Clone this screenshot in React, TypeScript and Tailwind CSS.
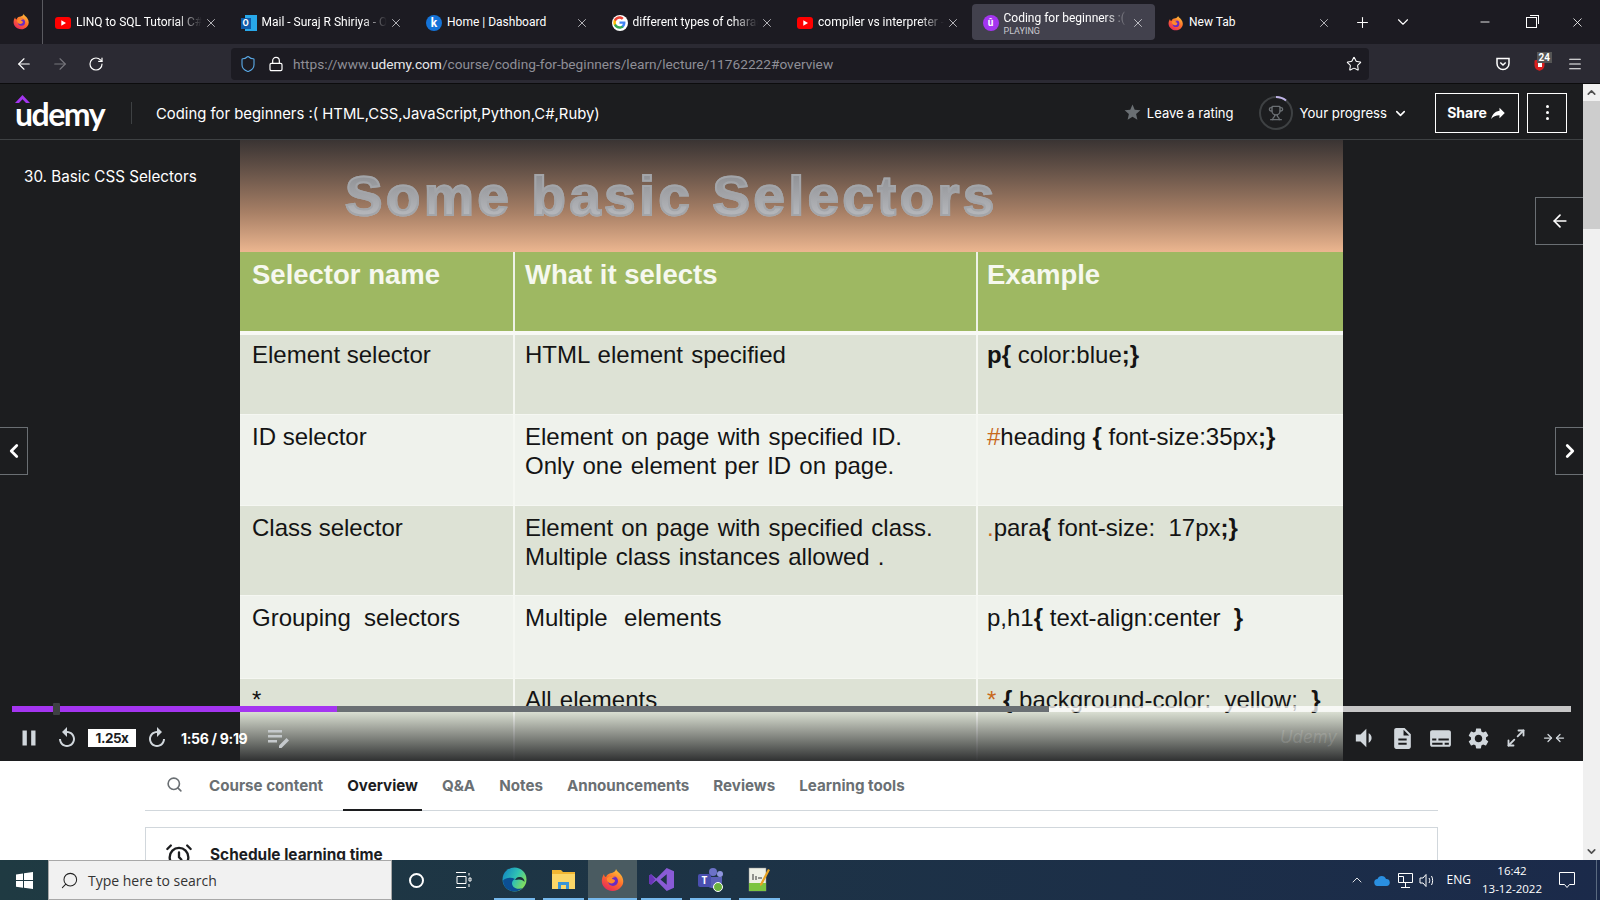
import { ArrowLeft, ArrowRight, ChevronDown, ChevronLeft, ChevronRight, ChevronUp, Lock, Maximize2, Menu, Minus, Plus, RotateCw, Search, Shield, Star, Trophy, X, AlarmClock } from 'lucide-react';
import { MdDescription, MdPause, MdReplay, MdReply, MdSettings, MdStar, MdSubtitles, MdVolumeDown } from 'react-icons/md';

function Firefox({ size = 18 }: { size?: number }) {
  return (
    <svg width={size} height={size} viewBox="0 0 24 24">
      <defs>
        <linearGradient id="ffBody" x1="0.8" y1="0" x2="0.2" y2="1">
          <stop offset="0" stopColor="#ffc93a" />
          <stop offset="0.5" stopColor="#ff6a2b" />
          <stop offset="1" stopColor="#e5245e" />
        </linearGradient>
      </defs>
      <path d="M15 1c1 3 3 3 5 6 3 4 3 9 0 12-3 4-9 5-13 3C3 20 0 16 1 11c.3-2 1-3 2-5 0 2 1 3 2 3 1-3 4-4 6-4 2-1 4-2 4-4z" fill="url(#ffBody)" />
      <circle cx="12" cy="13" r="5" fill="#6a2bc4" />
      <path d="M6 10c2-2 6-3 9-1-3 0-4 1-4 2 2 0 3 1 3 2-1 3-5 3-7 1-1-1-1.500-3-1-4z" fill="#ff8a2b" />
    </svg>
  );
}

function YouTube() {
  return (
    <svg width="16" height="16" viewBox="0 0 16 16">
      <rect x="0" y="2" width="16" height="12" rx="3" fill="#f00" />
      <path d="M6.300 5.300 11 8l-4.700 2.700z" fill="#fff" />
    </svg>
  );
}

function Outlook() {
  return (
    <div className="relative h-4 w-4">
      <div className="absolute right-0 top-0 h-4 w-3 bg-[#28a8ea]" />
      <div className="absolute left-0 top-[3px] flex h-[11px] w-[10px] items-center justify-center bg-[#0f5ba8] text-[9px] font-bold leading-none text-white">O</div>
    </div>
  );
}

function Google() {
  return (
    <div className="flex h-4 w-4 items-center justify-center rounded-full bg-white">
      <svg width="13" height="13" viewBox="0 0 24 24">
        <path d="M23 12.300c0-.8-.1-1.600-.2-2.300H12v4.400h6.200c-.3 1.400-1.100 2.600-2.300 3.400v2.800h3.700c2.100-2 3.400-4.900 3.400-8.300z" fill="#4285f4" />
        <path d="M12 23.500c3.100 0 5.700-1 7.600-2.800l-3.700-2.900c-1 .7-2.300 1.100-3.900 1.100-3 0-5.500-2-6.400-4.700H1.800v2.900c1.900 3.800 5.800 6.400 10.200 6.400z" fill="#34a853" />
        <path d="M5.600 14.200c-.5-1.400-.5-3 0-4.400V6.900H1.800c-1.600 3.200-1.600 7 0 10.200z" fill="#fbbc05" />
        <path d="M12 5.100c1.700 0 3.200.6 4.400 1.700l3.300-3.300C17.700 1.600 15.100.5 12 .5 7.600.5 3.700 3.100 1.800 6.900l3.800 2.900C6.500 7.100 9 5.100 12 5.100z" fill="#ea4335" />
      </svg>
    </div>
  );
}

function Klipfolio() {
  return <div className="flex h-4 w-4 items-center justify-center rounded-full bg-[#1473d8] text-[12px] font-bold leading-none text-white">k</div>;
}

function UdemyFav() {
  return <div className="flex h-4 w-4 items-center justify-center rounded-full bg-[#a435f0] text-[10px] font-bold leading-none text-white">û</div>;
}

const tabs = [
  { title: 'LINQ to SQL Tutorial C# - YouTube', icon: <YouTube />, fade: true },
  { title: 'Mail - Suraj R Shiriya - Outlook', icon: <Outlook />, fade: true },
  { title: 'Home | Dashboard', icon: <Klipfolio />, fade: false },
  { title: 'different types of character', icon: <Google />, fade: true },
  { title: 'compiler vs interpreter - YouTube', icon: <YouTube />, fade: true },
  { title: 'Coding for beginners :( HTML', icon: <UdemyFav />, fade: true, active: true },
  { title: 'New Tab', icon: <Firefox size={16} />, fade: false },
];

function TabBar() {
  return (
    <div className="flex h-[44px] items-stretch bg-[#1c1b22] text-white">
      <div className="flex w-[43px] items-center justify-center border-r border-[#5a5a60] pb-[2px]">
        <Firefox size={17} />
      </div>
      {tabs.map((t) => (
        <div key={t.title} className="w-[185.500px] shrink-0 py-[4px] pl-[1px] pr-[1px]">
          <div className={`flex h-full items-center rounded pl-[11px] pr-[10px] pt-[1px] ${t.active ? 'bg-[#42414d]' : ''}`}>
            <div className="mr-[5px] shrink-0">{t.icon}</div>
            <div className={`min-w-0 flex-1 ${t.active ? 'pt-[3px]' : ''}`}>
              <div className={`overflow-hidden whitespace-nowrap text-[12px] leading-[15px] ${t.fade ? '[mask-image:linear-gradient(to_right,black_80%,transparent)]' : ''}`}>{t.title}</div>
              {t.active && <div className="text-[9px] leading-[11px] text-[#c9c8cf]">PLAYING</div>}
            </div>
            <X size={14} strokeWidth={1.300} className="ml-[2px] shrink-0 text-[#e0e0e4]" />
          </div>
        </div>
      ))}
      <div className="flex w-[41px] items-center justify-center"><Plus size={17} strokeWidth={1.500} /></div>
      <div className="flex w-[40px] items-center justify-center"><ChevronDown size={18} strokeWidth={1.500} /></div>
      <div className="flex flex-1 items-center justify-end">
        <div className="flex w-[46px] justify-center"><Minus size={14} strokeWidth={1.500} /></div>
        <div className="flex w-[46px] justify-center">
          <div className="relative h-[11px] w-[11px] border border-white">
            <div className="absolute -right-[3px] -top-[3px] h-[9px] w-[9px] border-r border-t border-white" />
          </div>
        </div>
        <div className="flex w-[46px] justify-center"><X size={15} strokeWidth={1.300} /></div>
      </div>
    </div>
  );
}

function Toolbar() {
  return (
    <div className="flex h-[40px] items-center border-b border-[#0c0c0d] bg-[#2b2a33] pt-[1px] text-white">
      <div className="flex w-[231px] items-center pl-[15px]">
        <ArrowLeft size={18} strokeWidth={1.500} className="mr-[18px]" />
        <ArrowRight size={18} strokeWidth={1.500} className="mr-[18px] text-[#77767d]" />
        <RotateCw size={16} strokeWidth={1.800} className="ml-[1px]" />
      </div>
      <div className="flex h-[32px] w-[1138px] items-center rounded bg-[#1c1b22] pl-[8px] pr-[7px]">
        <Shield size={18} strokeWidth={1.500} className="mr-[11px] text-[#5aa9e6]" />
        <Lock size={16} strokeWidth={1.800} className="mr-[9px]" />
        <div className="flex-1 whitespace-nowrap text-[13.700px] text-[#8f8f97]">
          https://www.<span className="text-[#e8e8ea]">udemy.com</span>/course/coding-for-beginners/learn/lecture/11762222#overview
        </div>
        <Star size={16} strokeWidth={1.600} />
      </div>
      <div className="flex flex-1 items-center pl-[126px]">
        <svg width="16" height="16" viewBox="0 0 16 16" fill="none" stroke="#fff" strokeWidth="1.500">
          <path d="M2 2.500h12v5a6 6 0 0 1-12 0z" />
          <path d="M5.300 6.500 8 9l2.700-2.500" />
        </svg>
        <div className="relative ml-[21px] mr-[20px]">
          <Shield size={15} fill="#d81e1e" strokeWidth={0} />
          <div className="absolute left-[5.500px] top-[6px] h-[4px] w-[4px] bg-white" />
          <div className="absolute -right-[5px] -top-[5px] bg-[#555] px-[2px] text-[10px] font-bold leading-[11px]">24</div>
        </div>
        <Menu size={16} strokeWidth={1.600} />
      </div>
    </div>
  );
}

function UdemyHeader() {
  return (
    <div className="flex h-[56px] items-center border-b border-[#3e4143] bg-[#1c1d1f] pr-[16px] pt-[2px] text-white" style={{ fontFamily: 'Inter, sans-serif' }}>
      <div className="relative ml-[15px] w-[92px]">
        <svg width="15" height="8" viewBox="0 0 15 8" className="absolute left-0 top-[0px]">
          <path d="M7.500 0 15 8H11L7.500 4.200 4 8H0z" fill="#a435f0" />
        </svg>
        <div className="pt-[3px] text-[32px] font-bold leading-[32px] tracking-[-1.500px]" style={{ fontFamily: 'Lato, sans-serif' }}>udemy</div>
      </div>
      <div className="ml-[24px] h-[22px] w-px bg-[#3e4143]" />
      <div className="ml-[24px] mt-[4px] flex-1 text-[14.850px]">Coding for beginners :( HTML,CSS,JavaScript,Python,C#,Ruby)</div>
      <MdStar size={19} className="text-[#6a6f73]" />
      <div className="ml-[5px] mt-[3px] text-[13px]">Leave a rating</div>
      <div className="relative ml-[24px] flex h-[36px] w-[36px] items-center justify-center">
        <svg width="36" height="36" viewBox="0 0 36 36" className="absolute inset-0" fill="none">
          <circle cx="18" cy="18" r="16" stroke="#3e4143" strokeWidth="2" />
          <path d="M18 2a16 16 0 0 1 10 3.500" stroke="#c0b4e8" strokeWidth="2" />
        </svg>
        <Trophy size={16} className="text-[#6a6f73]" />
      </div>
      <div className="ml-[6px] mt-[3px] text-[13.200px]">Your progress</div>
      <ChevronDown size={15} strokeWidth={2.500} className="ml-[6px] mt-[2px]" />
      <div className="ml-[27px] flex h-[40px] w-[84px] items-center justify-center gap-[2px] border border-white text-[14px] font-bold">
        Share
        <MdReply size={18} className="-scale-x-100" />
      </div>
      <div className="ml-[8px] flex h-[40px] w-[40px] items-center justify-center border border-white">
        <div className="flex flex-col gap-[3px]">
          <div className="h-[3px] w-[3px] rounded-full bg-white" />
          <div className="h-[3px] w-[3px] rounded-full bg-white" />
          <div className="h-[3px] w-[3px] rounded-full bg-white" />
        </div>
      </div>
    </div>
  );
}

function Br({ children }: { children: string }) {
  return <b className="font-bold">{children}</b>;
}

function Hi({ children }: { children: string }) {
  return <span className="text-[#c8691c]">{children}</span>;
}

const rows = [
  { h: 'h-[80px]', pad: 'pt-[5px]', bg: 'bg-[#dde2d5]', a: 'Element selector', b: 'HTML element specified', c: <><Br>{'p{'}</Br> color:blue<Br>{';}'}</Br></> },
  { h: 'h-[91px]', pad: 'pt-[7px]', bg: 'bg-[#eff2ec]', a: 'ID selector', b: 'Element on page with specified ID.\nOnly one element per ID on page.', c: <><Hi>#</Hi>heading <Br>{'{'}</Br> font-size:35px<Br>{';}'}</Br></> },
  { h: 'h-[90px]', pad: 'pt-[7px]', bg: 'bg-[#dde2d5]', a: 'Class selector', b: 'Element on page with specified class.\nMultiple class instances allowed .', c: <><Hi>.</Hi>para<Br>{'{'}</Br> font-size:  17px<Br>{';}'}</Br></> },
  { h: 'h-[83px]', pad: 'pt-[7px]', bg: 'bg-[#eff2ec]', a: 'Grouping  selectors', b: 'Multiple  elements', c: <>p,h1<Br>{'{'}</Br> text-align:center  <Br>{'}'}</Br></> },
  { h: 'h-[82px]', pad: 'pt-[6px]', bg: 'bg-[#dde2d5]', a: '*', b: 'All elements', c: <><Hi>*</Hi> <Br>{'{'}</Br> background-color:  yellow;  <Br>{'}'}</Br></> },
];

function Slide() {
  return (
    <div className="w-[1103px] overflow-hidden" style={{ fontFamily: '"Liberation Sans", Arial, sans-serif' }}>
      <div className="flex h-[112px] items-start bg-linear-to-b from-[#3a3433] via-[#a88066] via-65% to-[#ecb690] pl-[105px] pt-[23px]">
        <div className="bg-linear-to-b from-[#85868a] to-[#c3c5c9] bg-clip-text text-[56px] font-bold leading-[66px] tracking-[3.700px] text-transparent [-webkit-text-stroke:2px_#a3a5a9]">Some basic Selectors</div>
      </div>
      <div className="grid h-[79px] grid-cols-[275px_463px_365px] bg-[#9eb862] text-[27.500px] font-bold leading-[30px] text-[#f6f8ef]">
        <div className="border-r-2 border-[#eef1e6] pl-[12px] pt-[8px]">Selector name</div>
        <div className="border-r-2 border-[#eef1e6] pl-[10px] pt-[8px]">What it selects</div>
        <div className="pl-[9px] pt-[8px]">Example</div>
      </div>
      <div className="h-[4px] bg-[#f8f9f5]" />
      {rows.map((r) => (
        <div key={r.a} className={`grid grid-cols-[275px_463px_365px] border-b border-[#f5f7f2] text-[24px] leading-[29px] text-[#141414] ${r.h} ${r.bg}`}>
          <div className={`whitespace-pre border-r-2 border-[#f5f7f2] pl-[12px] ${r.pad}`}>{r.a}</div>
          <div className={`whitespace-pre border-r-2 border-[#f5f7f2] pl-[10px] [word-spacing:1.500px] ${r.pad}`}>{r.b}</div>
          <div className={`whitespace-pre pl-[9px] ${r.pad}`}>{r.c}</div>
        </div>
      ))}
    </div>
  );
}

function NoteIcon() {
  return (
    <svg width="24" height="20" viewBox="0 0 24 20" fill="#c5c9cc">
      <rect x="1" y="2" width="14" height="2.500" />
      <rect x="1" y="7" width="14" height="2.500" />
      <rect x="1" y="12" width="9" height="2.500" />
      <path d="M12 17.500v2.500h2.500l7.500-7.500-2.500-2.500z" />
    </svg>
  );
}

function Controls() {
  const btn = 'flex w-[38px] justify-center';
  return (
    <div className="absolute inset-x-0 bottom-0 h-[49px] text-white" style={{ fontFamily: 'Inter, sans-serif' }}>
      <div className="flex h-[46px] items-center justify-between pl-[10px] pr-[10px] pt-[6px]">
        <div className="flex items-center">
          <div className={btn}><MdPause size={26} className="text-[#d1d7dc]" /></div>
          <div className={btn}><MdReplay size={24} className="text-[#d1d7dc]" /></div>
          <div className="ml-[2px] flex h-[18px] w-[48px] items-center justify-center bg-white text-[13.500px] font-bold tracking-[-0.500px] text-[#1c1d1f]">1.25x</div>
          <div className={`${btn} ml-[2px]`}><MdReplay size={24} className="-scale-x-100 text-[#d1d7dc]" /></div>
          <div className="ml-[5px] w-[80px] whitespace-nowrap text-[14px] font-bold tracking-[-0.300px]">1:56 / 9:19</div>
          <div className="ml-[6px]"><NoteIcon /></div>
        </div>
        <div className="flex items-center">
          <div className="mr-[8px] text-[17px] italic text-white/15">Udemy</div>
          <div className={btn}><MdVolumeDown size={28} className="text-[#d1d7dc]" /></div>
          <div className={btn}><MdDescription size={25} className="text-[#d1d7dc]" /></div>
          <div className={btn}><MdSubtitles size={25} className="text-[#d1d7dc]" /></div>
          <div className={btn}><MdSettings size={25} className="text-[#d1d7dc]" /></div>
          <div className={btn}><Maximize2 size={20} strokeWidth={2.200} className="text-[#d1d7dc]" /></div>
          <div className={`${btn} items-center`}>
            <ArrowRight size={12} strokeWidth={2.500} className="text-[#d1d7dc]" />
            <ArrowLeft size={12} strokeWidth={2.500} className="text-[#d1d7dc]" />
          </div>
        </div>
      </div>
    </div>
  );
}

function Video() {
  return (
    <div className="relative flex h-[621px] bg-[#1c1d1f]">
      <div className="w-[240px] shrink-0 pl-[24px] pt-[25px] text-[15.200px] leading-[24px] text-white" style={{ fontFamily: 'Inter, sans-serif' }}>30. Basic CSS Selectors</div>
      <Slide />
      <div className="absolute inset-x-0 bottom-0 ml-[240px] mr-[240px] h-[50px] bg-linear-to-b from-transparent to-[#1c1d1f]/90" />

      <div className="absolute left-0 top-[287px] flex h-[48px] w-[28px] items-center justify-center border border-l-0 border-[#6a6f73] bg-[#1c1d1f] text-white">
        <ChevronLeft size={22} strokeWidth={3} />
      </div>
      <div className="absolute right-0 top-[287px] flex h-[48px] w-[28px] items-center justify-center border border-r-0 border-[#6a6f73] bg-[#1c1d1f] text-white">
        <ChevronRight size={22} strokeWidth={3} />
      </div>
      <div className="absolute right-0 top-[57px] flex h-[48px] w-[48px] items-center justify-center border border-r-0 border-[#6a6f73] bg-[#1c1d1f] text-white">
        <ArrowLeft size={20} strokeWidth={2} />
      </div>

      <div className="absolute inset-x-[12px] bottom-[49px] flex h-[6px]">
        <div className="w-[325px] bg-[#a435f0]" />
        <div className="w-[712px] bg-[#6a6f73]" />
        <div className="flex-1 bg-white/75" />
      </div>
      <div className="absolute bottom-[46px] left-[53px] h-[12px] w-[7px] rounded-[1px] bg-[#3e4143]" />
      <Controls />
    </div>
  );
}

function CourseTabs() {
  const items = ['Course content', 'Overview', 'Q&A', 'Notes', 'Announcements', 'Reviews', 'Learning tools'];
  return (
    <div className="flex-1 overflow-hidden bg-white" style={{ fontFamily: 'Inter, sans-serif' }}>
      <div className="ml-[145px] w-[1293px]">
        <div className="flex h-[50px] items-stretch border-b border-[#d1d7dc] pl-[21px]">
          <div className="w-[39px] pt-[15px]"><Search size={17} strokeWidth={2.300} className="text-[#6a6f73]" /></div>
          <div className="flex gap-[16px]">
            {items.map((item) => (
              <div
                key={item}
                className={`flex h-[50px] items-center border-b-2 px-[4px] pt-[2px] text-[15.150px] font-bold ${item === 'Overview' ? 'border-[#1c1d1f] text-[#1c1d1f]' : 'border-transparent text-[#6a6f73]'}`}
              >
                {item}
              </div>
            ))}
          </div>
        </div>
        <div className="mt-[16px] flex h-[80px] items-start border border-[#d1d7dc] pl-[19px] pt-[14px]">
          <AlarmClock size={28} strokeWidth={2} className="text-[#1c1d1f]" />
          <div className="ml-[17px] pt-[1px] text-[15.400px] font-bold text-[#1c1d1f]">Schedule learning time</div>
        </div>
      </div>
    </div>
  );
}

function Scrollbar() {
  return (
    <div className="flex w-[17px] shrink-0 flex-col bg-[#f0f0f0]">
      <div className="flex h-[17px] items-center justify-center bg-[#f0f0f0]"><ChevronUp size={13} strokeWidth={3} className="text-[#505050]" /></div>
      <div className="h-[128px] bg-[#cdcdcd]" />
      <div className="flex-1" />
      <div className="flex h-[17px] items-center justify-center"><ChevronDown size={13} strokeWidth={3} className="text-[#505050]" /></div>
    </div>
  );
}

const appIcons = [
  <svg key="edge" width="25" height="25" viewBox="0 0 24 24">
    <defs>
      <linearGradient id="edgeG" x1="0" y1="0" x2="1" y2="0.500">
        <stop offset="0" stopColor="#0f7fc4" />
        <stop offset="0.600" stopColor="#2fc2b4" />
        <stop offset="1" stopColor="#7ddc62" />
      </linearGradient>
    </defs>
    <circle cx="12" cy="12" r="11.500" fill="url(#edgeG)" />
    <path d="M1 13c0 6 5 10.500 11 10.500 3 0 6-1 7.500-3-3 1-8 .5-9.500-3-1-2.500 0-5 2.500-6-4-2-9-1-11.500 1.500z" fill="#0b4f94" />
    <path d="M12.500 12.500c4-1 8-.5 9 2 .5-3-2-5-5-5-2 0-3.500 1.500-4 3z" fill="#1c2f3c" />
  </svg>,
  <svg key="folder" width="23" height="21" viewBox="0 0 23 21">
    <path d="M0 1h9l2 2h12v17H0z" fill="#f2b632" />
    <rect x="0" y="5" width="23" height="15" fill="#fcd667" />
    <path d="M6 20v-7h11v7h-3v-4H9v4z" fill="#3a94d6" />
  </svg>,
  <Firefox key="ff" size={24} />,
  <svg key="vs" width="25" height="25" viewBox="0 0 24 24">
    <path d="M17 1 24 4v16l-7 3L7 13l-5 4-2-1.500V8.500L2 7l5 4zM17 7l-6 5 6 5z" fill="#8a5bd6" />
    <path d="M2 7 0 8.500v7L2 17l4-5z" fill="#6a35b8" />
  </svg>,
  <div key="teams" className="relative h-[24px] w-[25px]">
    <div className="absolute right-[6px] top-0 h-[8px] w-[8px] rounded-full bg-[#6c72c8]" />
    <div className="absolute right-0 top-[3px] h-[6px] w-[6px] rounded-full bg-[#8f95de]" />
    <div className="absolute right-[1px] top-[9px] h-[11px] w-[16px] rounded-b-md bg-[#5b60b8]" />
    <div className="absolute left-0 top-[6px] flex h-[13px] w-[13px] items-center justify-center rounded-[2px] bg-[#4a4fb0] text-[10px] font-bold leading-none text-white">T</div>
    <div className="absolute bottom-0 right-0 flex h-[10px] w-[10px] items-center justify-center rounded-full border border-white bg-[#6cb33f]" />
  </div>,
  <svg key="note" width="23" height="25" viewBox="0 0 23 25">
    <rect x="1" y="1" width="17" height="23" fill="#eef0e6" stroke="#888" strokeWidth="0.500" />
    <rect x="1" y="16" width="17" height="8" fill="#7cc440" />
    <path d="M5 7v6M8 9v4M10 11h4" stroke="#333" strokeWidth="1" />
    <path d="M20 2l2 1-8 15-2 1 0-2z" fill="#e8a323" />
  </svg>,
];

function Taskbar() {
  return (
    <div className="flex h-[40px] shrink-0 items-stretch bg-linear-to-r from-[#1f3a42] to-[#1b2a4a] text-white" style={{ fontFamily: '"Open Sans", sans-serif' }}>
      <div className="flex w-[48px] items-center justify-center">
        <svg width="17" height="17" viewBox="0 0 17 17" fill="#fff">
          <path d="M0 2.400 7 1.400v6.700H0zM8 1.200 17 0v8.100H8zM0 9h7v6.700l-7-1zM8 9h9v8l-9-1.300z" />
        </svg>
      </div>
      <div className="flex w-[344px] items-center border border-[#a8a8a8] bg-[#f1f1f1] pl-[11px] text-[14px] text-[#333]">
        <Search size={19} strokeWidth={1.300} className="mr-[9px] -scale-x-100 text-[#222]" />
        Type here to search
      </div>
      <div className="flex w-[48px] items-center justify-center">
        <div className="h-[15px] w-[15px] rounded-full border-2 border-white" />
      </div>
      <div className="flex w-[48px] items-center justify-center">
        <svg width="16" height="16" viewBox="0 0 16 16" fill="none" stroke="#fff" strokeWidth="1">
          <path d="M0 .500h10M0 15.500h10M1 4.500h9v7H1zM13 1v2.500M13 6h2v3h-2zM13 12v3" />
        </svg>
      </div>
      <div className="flex pl-[2px]">
        {appIcons.map((icon, i) => (
          <div key={i} className={`relative flex w-[49px] items-center justify-center pb-[1px] ${i === 2 ? 'bg-[#4a5b61]' : ''}`}>
            {icon}
            <div className={`absolute bottom-0 h-[2px] bg-[#76b9ed] ${i === 2 ? 'inset-x-0' : 'inset-x-[4px]'}`} />
          </div>
        ))}
      </div>
      <div className="flex flex-1 items-center justify-end text-white">
        <ChevronUp size={16} strokeWidth={1.300} className="mr-[9px]" />
        <svg width="16" height="11" viewBox="0 0 16 11" fill="#2a8fe0" className="mr-[7px]">
          <path d="M4 11a3.500 3.500 0 0 1-.5-7A4.500 4.500 0 0 1 12 4a3.500 3.500 0 0 1 .5 7z" />
        </svg>
        <svg width="17" height="17" viewBox="0 0 17 17" fill="none" stroke="#fff" strokeWidth="1" className="mr-[5px]">
          <path d="M1.500 1.500h14v9h-14zM8.500 10.500v5M4 15.500h9M1.500 4.500h5v6" />
        </svg>
        <svg width="17" height="15" viewBox="0 0 17 15" fill="none" stroke="#fff" strokeWidth="1" className="mr-[11px]">
          <path d="M1 5h3l3-3.500v12L4 10H1zM10 5c1 1.500 1 3.500 0 5M12.500 3c1.500 2.500 1.500 6.500 0 9" />
        </svg>
        <div className="mr-[6px] text-[12px]">ENG</div>
        <div className="mr-[12px] w-[70px] whitespace-nowrap text-center text-[11.500px] leading-[18px]">
          <div>16:42</div>
          <div>13-12-2022</div>
        </div>
        <svg width="16" height="16" viewBox="0 0 16 16" fill="none" stroke="#fff" strokeWidth="1" className="mr-[21px]">
          <path d="M.500 .500h15v12h-5l-2.500 3-2.500-3h-5z" />
        </svg>
        <div className="mr-[3px] h-full w-px bg-[#5a6a80]" />
      </div>
    </div>
  );
}

export default function App() {
  return (
    <div className="flex h-[900px] w-[1600px] flex-col overflow-hidden bg-white" style={{ fontFamily: 'Roboto, sans-serif' }}>
      <TabBar />
      <Toolbar />
      <div className="flex min-h-0 flex-1">
        <div className="flex min-w-0 flex-1 flex-col">
          <UdemyHeader />
          <Video />
          <CourseTabs />
        </div>
        <Scrollbar />
      </div>
      <Taskbar />
    </div>
  );
}
